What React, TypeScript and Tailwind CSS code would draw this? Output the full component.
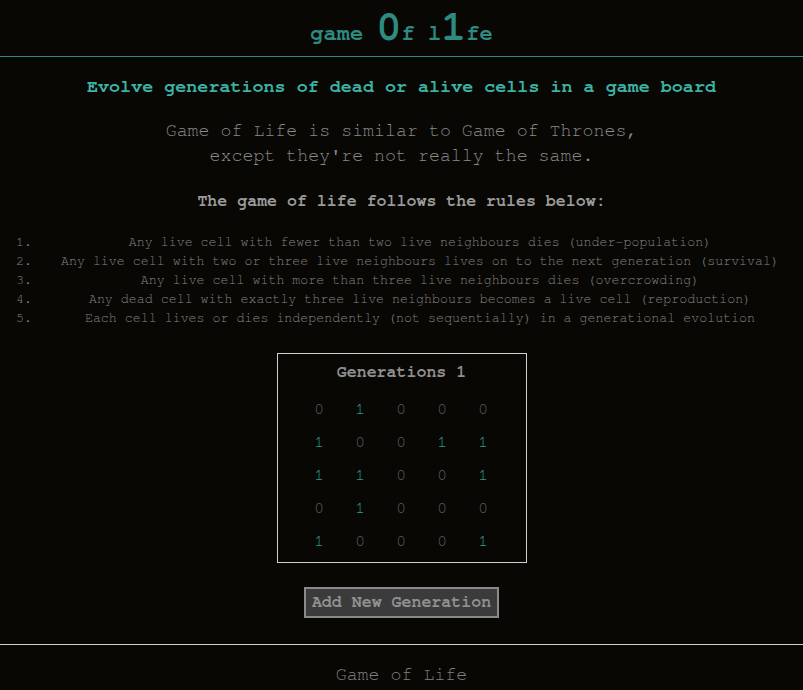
import React from "react";

const grid = [
  [0, 1, 0, 0, 0],
  [1, 0, 0, 1, 1],
  [1, 1, 0, 0, 1],
  [0, 1, 0, 0, 0],
  [1, 0, 0, 0, 1],
];

const rules = [
  "Any live cell with fewer than two live neighbours dies (under-population)",
  "Any live cell with two or three live neighbours lives on to the next generation (survival)",
  "Any live cell with more than three live neighbours dies (overcrowding)",
  "Any dead cell with exactly three live neighbours becomes a live cell (reproduction)",
  "Each cell lives or dies independently (not sequentially) in a generational evolution",
];

export default function App() {
  return (
    <div
      className="min-h-[690px] w-full bg-[#090704] overflow-hidden"
      style={{ fontFamily: '"Nimbus Mono PS", "Nimbus Mono L", "FreeMono", "Liberation Mono", monospace' }}
    >
      <h1 className="h-[57px] border-b border-[#2a8c82] text-center text-[#2e8b80] font-bold text-[22px] leading-[40px] pt-[7px]">
        game <span className="text-[42px]">0</span>f l<span className="text-[42px]">1</span>fe
      </h1>
      <div className="flex flex-col items-center">
        <h2 className="mt-[17px] text-[18.4px] leading-[25px] font-bold text-[#3cb4a4]">
          Evolve generations of dead or alive cells in a game board
        </h2>
        <p className="mt-[19px] text-[18.3px] leading-[25px] text-[#8a8a8a] text-center">
          Game of Life is similar to Game of Thrones,
          <br />
          except they're not really the same.
        </p>
        <h3 className="mt-[23px] text-[16.6px] leading-[20px] font-bold text-[#9a9a9a]">
          The game of life follows the rules below:
        </h3>
        <ol className="mt-[22px] w-full list-decimal pl-[40px] text-[13.3px] leading-[19px] text-[#858585] text-center">
          {rules.map((r) => (
            <li key={r} className="pr-[3px]">{r}</li>
          ))}
        </ol>
        <div className="mt-[25px] w-[250px] h-[210px] border border-[#cfcfcf] flex flex-col items-center">
          <div className="mt-[8px] text-[16.6px] leading-[20px] font-bold text-[#8f8f8f]">
            Generations 1
          </div>
          <div className="mt-[10px] grid grid-cols-[repeat(5,41px)] grid-rows-[repeat(5,33px)] ml-[-1px]">
            {grid.flat().map((v, i) => (
              <div
                key={i}
                className={`flex items-center justify-center text-[17px] ${
                  v ? "text-[#2a9d8f]" : "text-[#5a5a5a]"
                }`}
              >
                {v}
              </div>
            ))}
          </div>
        </div>
        <button className="mt-[24px] w-[195px] h-[31px] bg-[#3b3b3b] border-2 border-[#8a8a8a] text-[16.6px] font-bold text-[#909090] leading-none">
          Add New Generation
        </button>
      </div>
      <hr className="mt-[26px] border-0 border-t border-[#cfcfcf]" />
      <div className="mt-[19px] text-center text-[18.3px] leading-[22px] text-[#808080]">
        Game of Life
      </div>
    </div>
  );
}
